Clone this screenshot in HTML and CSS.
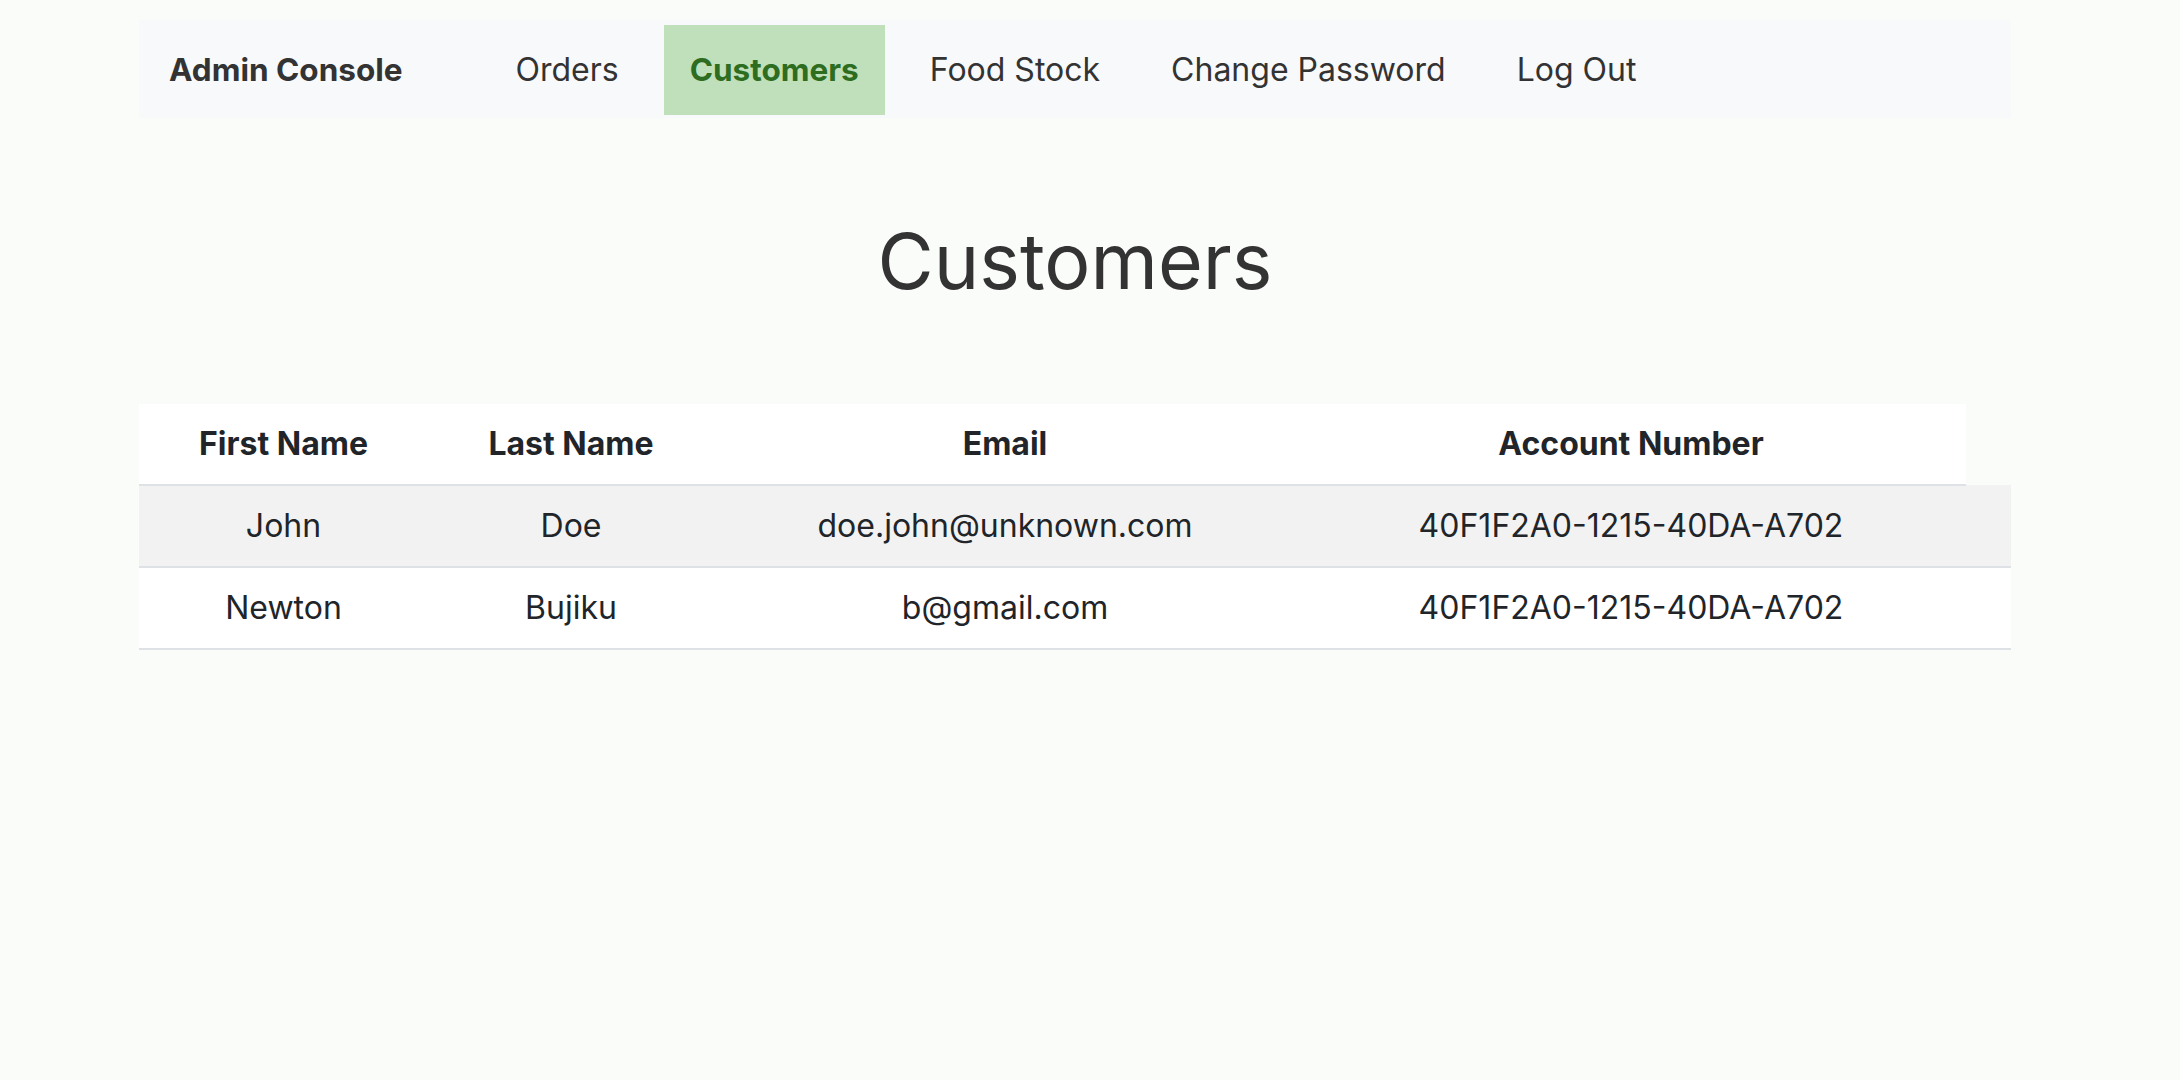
FILE: index.html
```html
<!DOCTYPE html>
<html lang="en">
<head>
<meta charset="utf-8">
<title>Customers - Admin Console</title>
<link rel="stylesheet" href="styles.css">
</head>
<body>
<div class="container">
  <nav class="navbar">
    <span class="brand">Admin Console</span>
    <ul class="nav-list">
      <li class="nav-item">Orders</li>
      <li class="nav-item active">Customers</li>
      <li class="nav-item">Food Stock</li>
      <li class="nav-item">Change Password</li>
      <li class="nav-item">Log Out</li>
    </ul>
  </nav>
  <h1 class="title">Customers</h1>
  <table class="customers">
    <colgroup>
      <col class="c1"><col class="c2"><col class="c3"><col class="c4"><col class="c5">
    </colgroup>
    <thead>
      <tr><th>First Name</th><th>Last Name</th><th>Email</th><th>Account Number</th></tr>
    </thead>
    <tbody>
      <tr class="stripe"><td>John</td><td>Doe</td><td>doe.john@unknown.com</td><td>40F1F2A0-1215-40DA-A702</td><td></td></tr>
      <tr><td>Newton</td><td>Bujiku</td><td>b@gmail.com</td><td>40F1F2A0-1215-40DA-A702</td><td></td></tr>
    </tbody>
  </table>
</div>
</body>
</html>
```

FILE: styles.css
```css
html, body {
  margin: 0;
  padding: 0;
  background: #fafcf9;
}
body {
  font-family: Inter, "Noto Sans", sans-serif;
  color: #333333;
  padding-top: 20px;
}
.container {
  width: 1872px;
  margin-left: 139px;
}
.navbar {
  display: flex;
  align-items: center;
  height: 98px;
  box-sizing: border-box;
  padding: 5px 0 3px 30px;
  background: #f8f9fb;
}
.brand {
  font-size: 31.5px;
  font-weight: 700;
  line-height: 46px;
  color: #333333;
  margin-right: 87px;
}
.nav-list {
  display: flex;
  gap: 19px;
  list-style: none;
  margin: 0;
  padding: 0;
}
.nav-item {
  font-size: 32px;
  line-height: 46px;
  padding: 22px 26px;
  color: #333333;
}
.nav-item.active {
  background: #bfe0bb;
  color: #2e6d1f;
  font-weight: 700;
  font-size: 31.5px;
}
.title {
  font-size: 77px;
  font-weight: 400;
  line-height: 92px;
  text-align: center;
  margin: 97px 0 97px;
  color: #333333;
}
.customers {
  border-collapse: collapse;
  table-layout: fixed;
  width: 1872px;
  color: #212529;
  font-size: 32px;
}
.c1 { width: 289px; }
.c2 { width: 286px; }
.c3 { width: 582px; }
.c4 { width: 670px; }
.c5 { width: 45px; }
.customers th,
.customers td {
  text-align: center;
  padding: 17px 0;
  line-height: 46px;
  border-bottom: 2px solid #dee2e6;
  background: #ffffff;
  white-space: nowrap;
}
.customers th {
  font-weight: 700;
}
.customers .stripe td {
  background: #f2f2f2;
}
```
